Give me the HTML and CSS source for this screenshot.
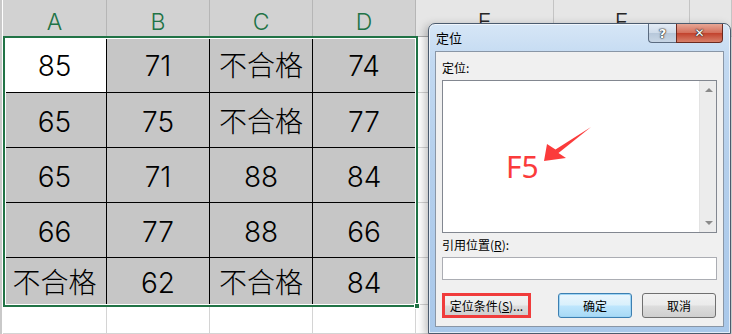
FILE: index.html
```html
<!DOCTYPE html>
<html lang="zh-CN">
<head>
<meta charset="UTF-8" />
<title>定位</title>
<link rel="stylesheet" href="styles.css">
</head>
<body>

<div class="sheet">
  <div class="grid">
    <!-- column headers -->
    <div class="corner"></div>
    <div class="colhead sel">A</div>
    <div class="colhead sel">B</div>
    <div class="colhead sel">C</div>
    <div class="colhead sel">D</div>
    <div class="colhead">E</div>
    <div class="colhead">F</div>
    <div class="colhead"></div>

    <!-- row 1 -->
    <div class="rowhead"></div>
    <div class="cell data active">85</div>
    <div class="cell data">71</div>
    <div class="cell data">不合格</div>
    <div class="cell data">74</div>
    <div class="cell"></div><div class="cell"></div><div class="cell"></div>

    <!-- row 2 -->
    <div class="rowhead"></div>
    <div class="cell data">65</div>
    <div class="cell data">75</div>
    <div class="cell data">不合格</div>
    <div class="cell data">77</div>
    <div class="cell"></div><div class="cell"></div><div class="cell"></div>

    <!-- row 3 -->
    <div class="rowhead"></div>
    <div class="cell data">65</div>
    <div class="cell data">71</div>
    <div class="cell data">88</div>
    <div class="cell data">84</div>
    <div class="cell"></div><div class="cell"></div><div class="cell"></div>

    <!-- row 4 -->
    <div class="rowhead"></div>
    <div class="cell data">66</div>
    <div class="cell data">77</div>
    <div class="cell data">88</div>
    <div class="cell data">66</div>
    <div class="cell"></div><div class="cell"></div><div class="cell"></div>

    <!-- row 5 -->
    <div class="rowhead"></div>
    <div class="cell data">不合格</div>
    <div class="cell data">62</div>
    <div class="cell data">不合格</div>
    <div class="cell data">84</div>
    <div class="cell"></div><div class="cell"></div><div class="cell"></div>

    <!-- row 6 (cut off) -->
    <div class="rowhead"></div>
    <div class="cell"></div><div class="cell"></div><div class="cell"></div><div class="cell"></div>
    <div class="cell"></div><div class="cell"></div><div class="cell"></div>
  </div>

  <!-- selection frame over A1:D5 -->
  <div class="selection"><span class="handle"></span></div>

  <!-- Go To dialog -->
  <div class="dialog" role="dialog" aria-labelledby="dlgTitle">
    <div class="titlebar">
      <span class="title" id="dlgTitle">定位</span>
      <div class="caption-btns">
        <span class="cap help">?</span>
        <span class="cap close">&#x2715;</span>
      </div>
    </div>

    <div class="panel">
      <label class="lbl">定位:</label>
      <div class="listbox">
        <span class="f5">F5</span>
        <svg class="arrow" width="160" height="100" viewBox="0 0 160 100">
          <polygon points="101,80 104,63 112.5,68.5 148,46 115.5,72 123,77" fill="#fb3b3b" />
        </svg>
        <div class="vscroll">
          <span class="tri up"></span>
          <span class="tri down"></span>
        </div>
      </div>

      <label class="lbl ref">引用位置(<u>R</u>):</label>
      <div class="textbox"></div>

      <div class="btnrow">
        <button class="btn marked">定位条件(<u>S</u>)...</button>
        <div class="btngroup">
          <button class="btn default">确定</button>
          <button class="btn">取消</button>
        </div>
      </div>
    </div>
  </div>
</div>

</body>
</html>
```

FILE: styles.css
```css
/* --- Reset --- */
* {
  box-sizing: border-box;
}
body {
  margin: 0;
  background: #fff;
  font-family: "Noto Sans", "Noto Sans CJK SC", sans-serif;
}

/* --- Worksheet --- */
.sheet {
  position: relative;
  width: 732px;
  height: 334px;
  overflow: hidden;
}
.grid {
  display: grid;
  grid-template-columns: 3px 104px 103px 103px 103px 138px 136px 1fr;
  grid-template-rows: 37px 56px 55px 55px 55px 47px 1fr;
  height: 334px;
}
.corner, .rowhead {
  background: #c9c9c9;
  border-right: 1px solid #fff;
}
.colhead {
  background: #e6e6e6;
  border-right: 1px solid #c4c4c4;
  border-bottom: 1px solid #ababab;
  text-align: center;
  font-family: "Inter", "Noto Sans", sans-serif;
  font-weight: 300;
  font-size: 23px;
  line-height: 24px;
  padding-top: 10px;
  color: #262626;
}
.colhead.sel {
  background: #d2d2d2;
  color: #217346;
  border-right-color: #b6b6b6;
}
.cell {
  border-right: 1px solid #d4d4d4;
  border-bottom: 1px solid #d4d4d4;
}
.cell.data {
  background: #c6c6c6;
  border-color: #000;
  display: flex;
  align-items: center;
  justify-content: center;
  padding-top: 3px;
  font-family: "Inter", "Noto Sans CJK SC", sans-serif;
  font-weight: 300;
  font-size: 28px;
  line-height: 1;
  color: #000;
}
.cell.data.active {
  background: #fff;
}

/* selection frame drawn on top of the range */
.selection {
  position: absolute;
  left: 3px; top: 36px;
  width: 415px; height: 271px;
  border: 2px solid #217346;
  box-shadow: inset 0 0 0 1px #fff;
}
.selection .handle {
  position: absolute;
  right: -4px; bottom: -4px;
  width: 6px; height: 6px;
  background: #217346;
  border: 1px solid #fff;
}

/* --- Dialog --- */
.dialog {
  position: absolute;
  left: 428px; top: 23px;
  width: 303px; height: 311px;
  display: flex;
  flex-direction: column;
  border: 1px solid #4b5b6e;
  border-radius: 7px 7px 0 0;
  background: linear-gradient(to bottom, #d6e6f6 0%, #c2d9f1 12%, #b4cfec 45%, #a9c8ea 100%);
  box-shadow: inset 0 0 0 1px rgba(255,255,255,0.65), -3px 2px 8px rgba(0,0,0,0.25);
  font-family: "Noto Sans CJK SC", sans-serif;
  font-size: 12px;
  color: #000;
}
.titlebar {
  height: 27px;
  display: flex;
  justify-content: space-between;
  padding: 0 7px 0 7px;
}
.title {
  font-size: 13px;
  line-height: 28px;
}
.caption-btns {
  display: flex;
  height: 19px;
}
.cap {
  display: flex;
  align-items: center;
  justify-content: center;
  height: 19px;
  color: #fff;
  font-weight: 700;
  font-family: "DejaVu Sans", sans-serif;
  text-shadow: 0 0 1px #222, 0 0 1px #222, 0 0 2px #333;
}
.cap.help {
  width: 28px;
  font-size: 13px;
  border: 1px solid #5b6b80;
  border-top: none;
  border-right: none;
  border-radius: 0 0 0 4px;
  background: linear-gradient(to bottom, #e4ecf5 0%, #cfdcea 48%, #b7c8da 52%, #c8d6e5 100%);
}
.cap.close {
  width: 47px;
  font-size: 12px;
  border: 1px solid #6b2a20;
  border-top: none;
  border-radius: 0 0 4px 0;
  background: linear-gradient(to bottom, #e7a695 0%, #d4705c 48%, #c2432e 52%, #d8806a 100%);
}

.panel {
  flex: 1;
  margin: 0 6px 6px 6px;
  background: #f0f0f0;
  border: 1px solid #8996a6;
  padding: 8px 6px 0 6px;
  display: flex;
  flex-direction: column;
}
.lbl {
  display: block;
  line-height: 16px;
  height: 16px;
}
.lbl.ref {
  margin-top: 4px;
}
.listbox {
  position: relative;
  margin-top: 4px;
  height: 153px;
  background: #fff;
  border: 1px solid #828790;
}
.vscroll {
  position: absolute;
  right: 0; top: 0; bottom: 0;
  width: 17px;
  background: #ececec;
  border-left: 1px solid #e3e3e3;
}
.tri {
  position: absolute;
  left: 5px;
  width: 0; height: 0;
  border-left: 4px solid transparent;
  border-right: 4px solid transparent;
}
.tri.up {
  top: 7px;
  border-bottom: 4px solid #8a8a8a;
}
.tri.down {
  bottom: 7px;
  border-top: 4px solid #8a8a8a;
}

/* red annotation over the list */
.f5 {
  position: absolute;
  left: 63px; top: 66px;
  font-family: "Noto Sans", sans-serif;
  font-size: 30px;
  line-height: 40px;
  color: #fb3b3b;
}
.arrow {
  position: absolute;
  left: 0; top: 0;
}

.textbox {
  margin-top: 4px;
  height: 23px;
  background: #fff;
  border: 1px solid #abadb3;
}

.btnrow {
  margin-top: 13px;
  display: flex;
  justify-content: space-between;
  padding-right: 1px;
}
.btngroup {
  display: flex;
  gap: 10px;
}
.btn {
  height: 25px;
  width: 74px;
  padding: 0;
  font-family: "Noto Sans CJK SC", sans-serif;
  font-size: 12px;
  color: #000;
  border: 1px solid #707070;
  border-radius: 3px;
  background: linear-gradient(to bottom, #f2f2f2 0%, #ebebeb 48%, #dddddd 52%, #cfcfcf 100%);
}
.btn.default {
  border-color: #3c7fb1;
  box-shadow: inset 0 0 0 1px #9fd5f5;
  background: linear-gradient(to bottom, #eaf6fd 0%, #d9f0fc 48%, #bee6fd 52%, #a7d9f5 100%);
}
.btn.marked {
  width: 89px;
  border: 3px solid #f03c3c;
  border-radius: 0;
}
```
